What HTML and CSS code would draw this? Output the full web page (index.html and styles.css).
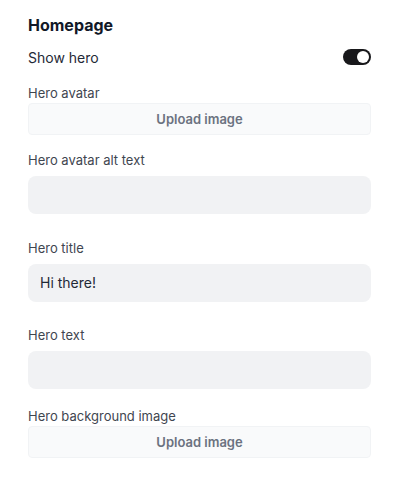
FILE: index.html
```html
<!DOCTYPE html>
<html lang="en">
<head>
  <meta charset="UTF-8">
  <meta name="viewport" content="width=device-width, initial-scale=1">
  <title>Homepage settings</title>
  <link rel="stylesheet" href="styles.css">
</head>
<body>

<div class="panel">
  <h2>Homepage</h2>

  <div class="toggle-row">
    <span>Show hero</span>
    <button class="switch on" onclick="this.classList.toggle('on')"><span class="knob"></span></button>
  </div>

  <div class="field upload-field">
    <label>Hero avatar</label>
    <button class="upload">Upload image</button>
  </div>

  <div class="field text-field">
    <label>Hero avatar alt text</label>
    <input type="text" value="">
  </div>

  <div class="field text-field">
    <label>Hero title</label>
    <input type="text" value="Hi there!">
  </div>

  <div class="field text-field">
    <label>Hero text</label>
    <input type="text" value="">
  </div>

  <div class="field upload-field">
    <label>Hero background image</label>
    <button class="upload">Upload image</button>
  </div>
</div>

</body>
</html>
```

FILE: styles.css
```css
* {
  box-sizing: border-box;
}

body {
  margin: 0;
  font-family: Inter, 'Noto Sans', sans-serif;
  background: #fff;
  color: #1f2937;
}

.panel {
  padding: 13px 28px;
  display: flex;
  flex-direction: column;
}

h2 {
  margin: 0;
  font-size: 16px;
  line-height: 24px;
  font-weight: 700;
  color: #111827;
}

.toggle-row {
  display: flex;
  justify-content: space-between;
  align-items: center;
  height: 24px;
  margin-top: 8px;
  font-size: 14px;
  color: #1f2937;
}

.switch {
  width: 28px;
  height: 16px;
  padding: 0;
  border: none;
  border-radius: 8px;
  background: #d1d5db;
  position: relative;
  cursor: pointer;
}

.switch .knob {
  position: absolute;
  top: 2px;
  left: 2px;
  width: 12px;
  height: 12px;
  border-radius: 50%;
  background: #fff;
}

.switch.on {
  background: #18181b;
}

.switch.on .knob {
  left: 14px;
}

.field {
  display: flex;
  flex-direction: column;
}

.field label {
  font-size: 13px;
  line-height: 20px;
  color: #3f4650;
}

.upload-field {
  margin-top: 14px;
}

.text-field {
  margin-top: 15px;
  margin-bottom: 8.5px;
  gap: 6px;
}

.text-field + .upload-field {
  margin-top: 8.5px;
}

.upload {
  height: 32px;
  border: 1px solid #f1f3f5;
  border-radius: 4px;
  background: #f9fafb;
  font-family: inherit;
  font-size: 13px;
  font-weight: 600;
  color: #6b7280;
  cursor: pointer;
}

.text-field input {
  height: 38px;
  border: none;
  border-radius: 8px;
  background: #f1f2f4;
  padding: 0 12px;
  font-family: inherit;
  font-size: 14px;
  color: #1f2937;
  outline: none;
}
```
